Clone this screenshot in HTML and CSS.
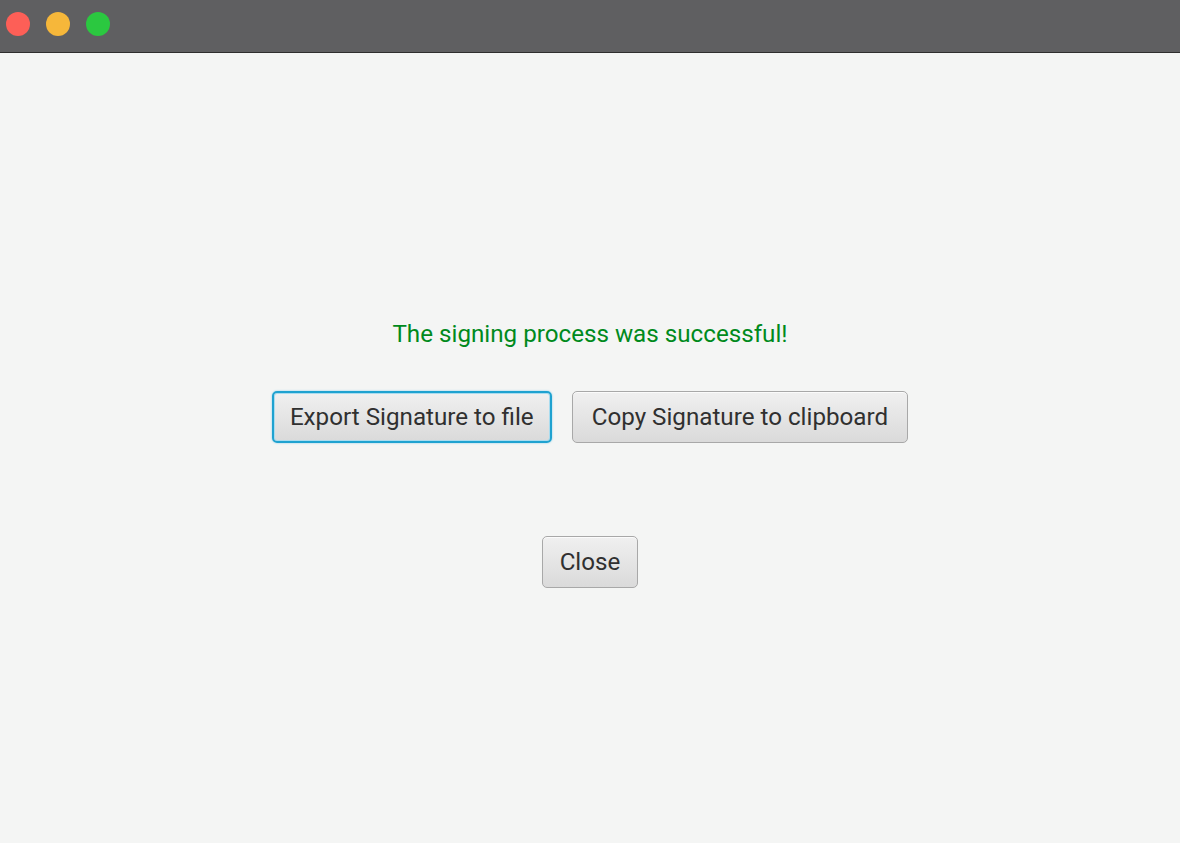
FILE: index.html
```html
<!DOCTYPE html>
<html>
<head>
<meta charset="utf-8">
<link rel="stylesheet" href="styles.css">
</head>
<body>
<div class="window">
  <div class="titlebar">
    <span class="dot red"></span>
    <span class="dot yellow"></span>
    <span class="dot green"></span>
  </div>
  <div class="content">
    <div class="message">The signing process was successful!</div>
    <div class="row">
      <button class="btn focused">Export Signature to file</button>
      <button class="btn wide">Copy Signature to clipboard</button>
    </div>
    <button class="btn close">Close</button>
  </div>
</div>
</body>
</html>
```
FILE: styles.css
```css
html, body {
  margin: 0;
  padding: 0;
  width: 1180px;
  height: 843px;
  overflow: hidden;
  background: #f4f5f4;
  font-family: Roboto, "Liberation Sans", sans-serif;
}
.window {
  display: flex;
  flex-direction: column;
  height: 843px;
}
.titlebar {
  height: 40px;
  background: #5f5f61;
  border-bottom: 1px solid #2e2e2e;
  display: flex;
  align-items: flex-start;
  gap: 16px;
  padding: 12px 0 0 6px;
  box-sizing: content-box;
}
.dot {
  width: 24px;
  height: 24px;
  border-radius: 50%;
  display: block;
}
.red { background: #fd5f57; }
.yellow { background: #f6b73a; }
.green { background: #2bc840; }
.content {
  display: flex;
  flex-direction: column;
  align-items: center;
  padding-top: 266px;
}
.message {
  color: #008a1c;
  font-size: 24.2px;
  line-height: 30px;
  height: 30px;
}
.row {
  display: flex;
  gap: 20px;
  margin-top: 42px;
}
.btn {
  font-family: inherit;
  font-size: 24.2px;
  color: #303030;
  height: 52px;
  padding: 0 16.5px;
  border: 1px solid #a8a8a8;
  border-radius: 5px;
  background: linear-gradient(#f0f0f0, #dadada);
  box-shadow: inset 0 1px 0 #fbfbfb;
  margin: 0;
}
.btn.wide {
  padding: 0 19px;
}
.btn.focused {
  border: 2px solid #1fa2d0;
  box-shadow: inset 0 0 0 1px #a9dcef, 0 0 2px #7cc9e8;
  padding: 0 16px;
}
.close {
  margin-top: 93px;
}
```
